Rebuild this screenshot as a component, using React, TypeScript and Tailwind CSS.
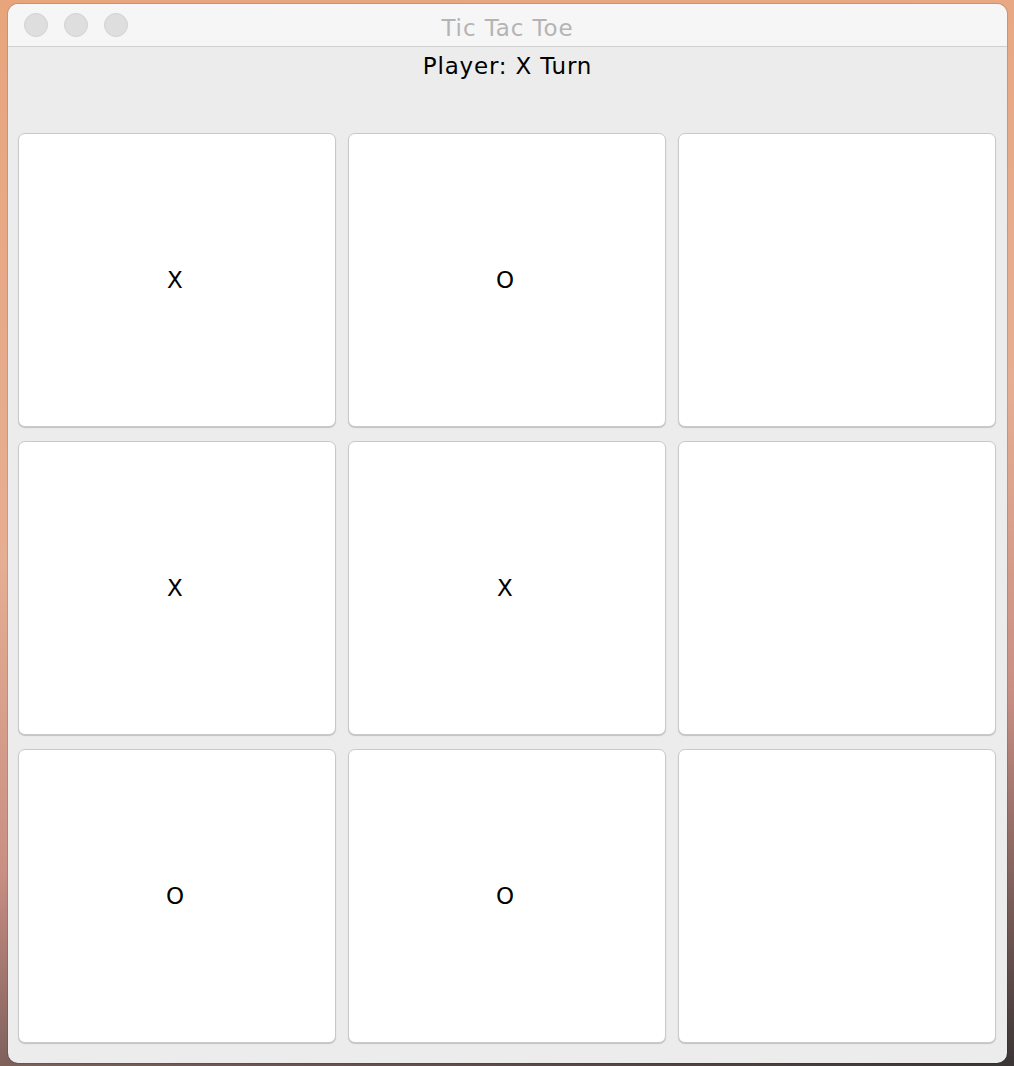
const board = ["X", "O", "", "X", "X", "", "O", "O", ""];

export default function App() {
  return (
    <div className="h-[1066px] w-[1014px] overflow-hidden bg-[linear-gradient(170deg,#e8a57c_0%,#e6ae92_45%,#c98f84_70%,#3b3536_100%)] pl-2 pr-[7px] pt-1 pb-[3px]">
      <div className="flex h-full flex-col overflow-hidden rounded-[10px] bg-[#ececec] font-['DejaVu_Sans',sans-serif] shadow-[0_0_0_1px_rgba(0,0,0,0.12)]">
        <div className="relative flex h-[43px] shrink-0 items-center border-b border-[#d1d1d1] bg-[#f6f6f6]">
          <div className="flex gap-4 pl-4">
            <span className="h-6 w-6 rounded-full border border-[#d2d2d2] bg-[#dedede]" />
            <span className="h-6 w-6 rounded-full border border-[#d2d2d2] bg-[#dedede]" />
            <span className="h-6 w-6 rounded-full border border-[#d2d2d2] bg-[#dedede]" />
          </div>
          <div className="absolute inset-0 flex items-center justify-center pt-[6px] text-[23px] tracking-[0.9px] text-[#b4b4b4]">
            Tic Tac Toe
          </div>
        </div>
        <div className="h-[86px] shrink-0 pt-[2px] text-center text-[23px] tracking-[0.8px] text-black">Player: X Turn</div>
        <div className="grid grid-cols-3 gap-x-3 gap-y-[14px] pl-[10px] pr-[11px]">
          {board.map((mark, i) => (
            <div
              key={i}
              className="flex h-[294px] items-center justify-center rounded-[7px] border border-[#c9c9c9] bg-white pr-1 text-[23px] text-black shadow-[0_1px_1px_rgba(0,0,0,0.18)]"
            >
              {mark}
            </div>
          ))}
        </div>
      </div>
    </div>
  );
}
